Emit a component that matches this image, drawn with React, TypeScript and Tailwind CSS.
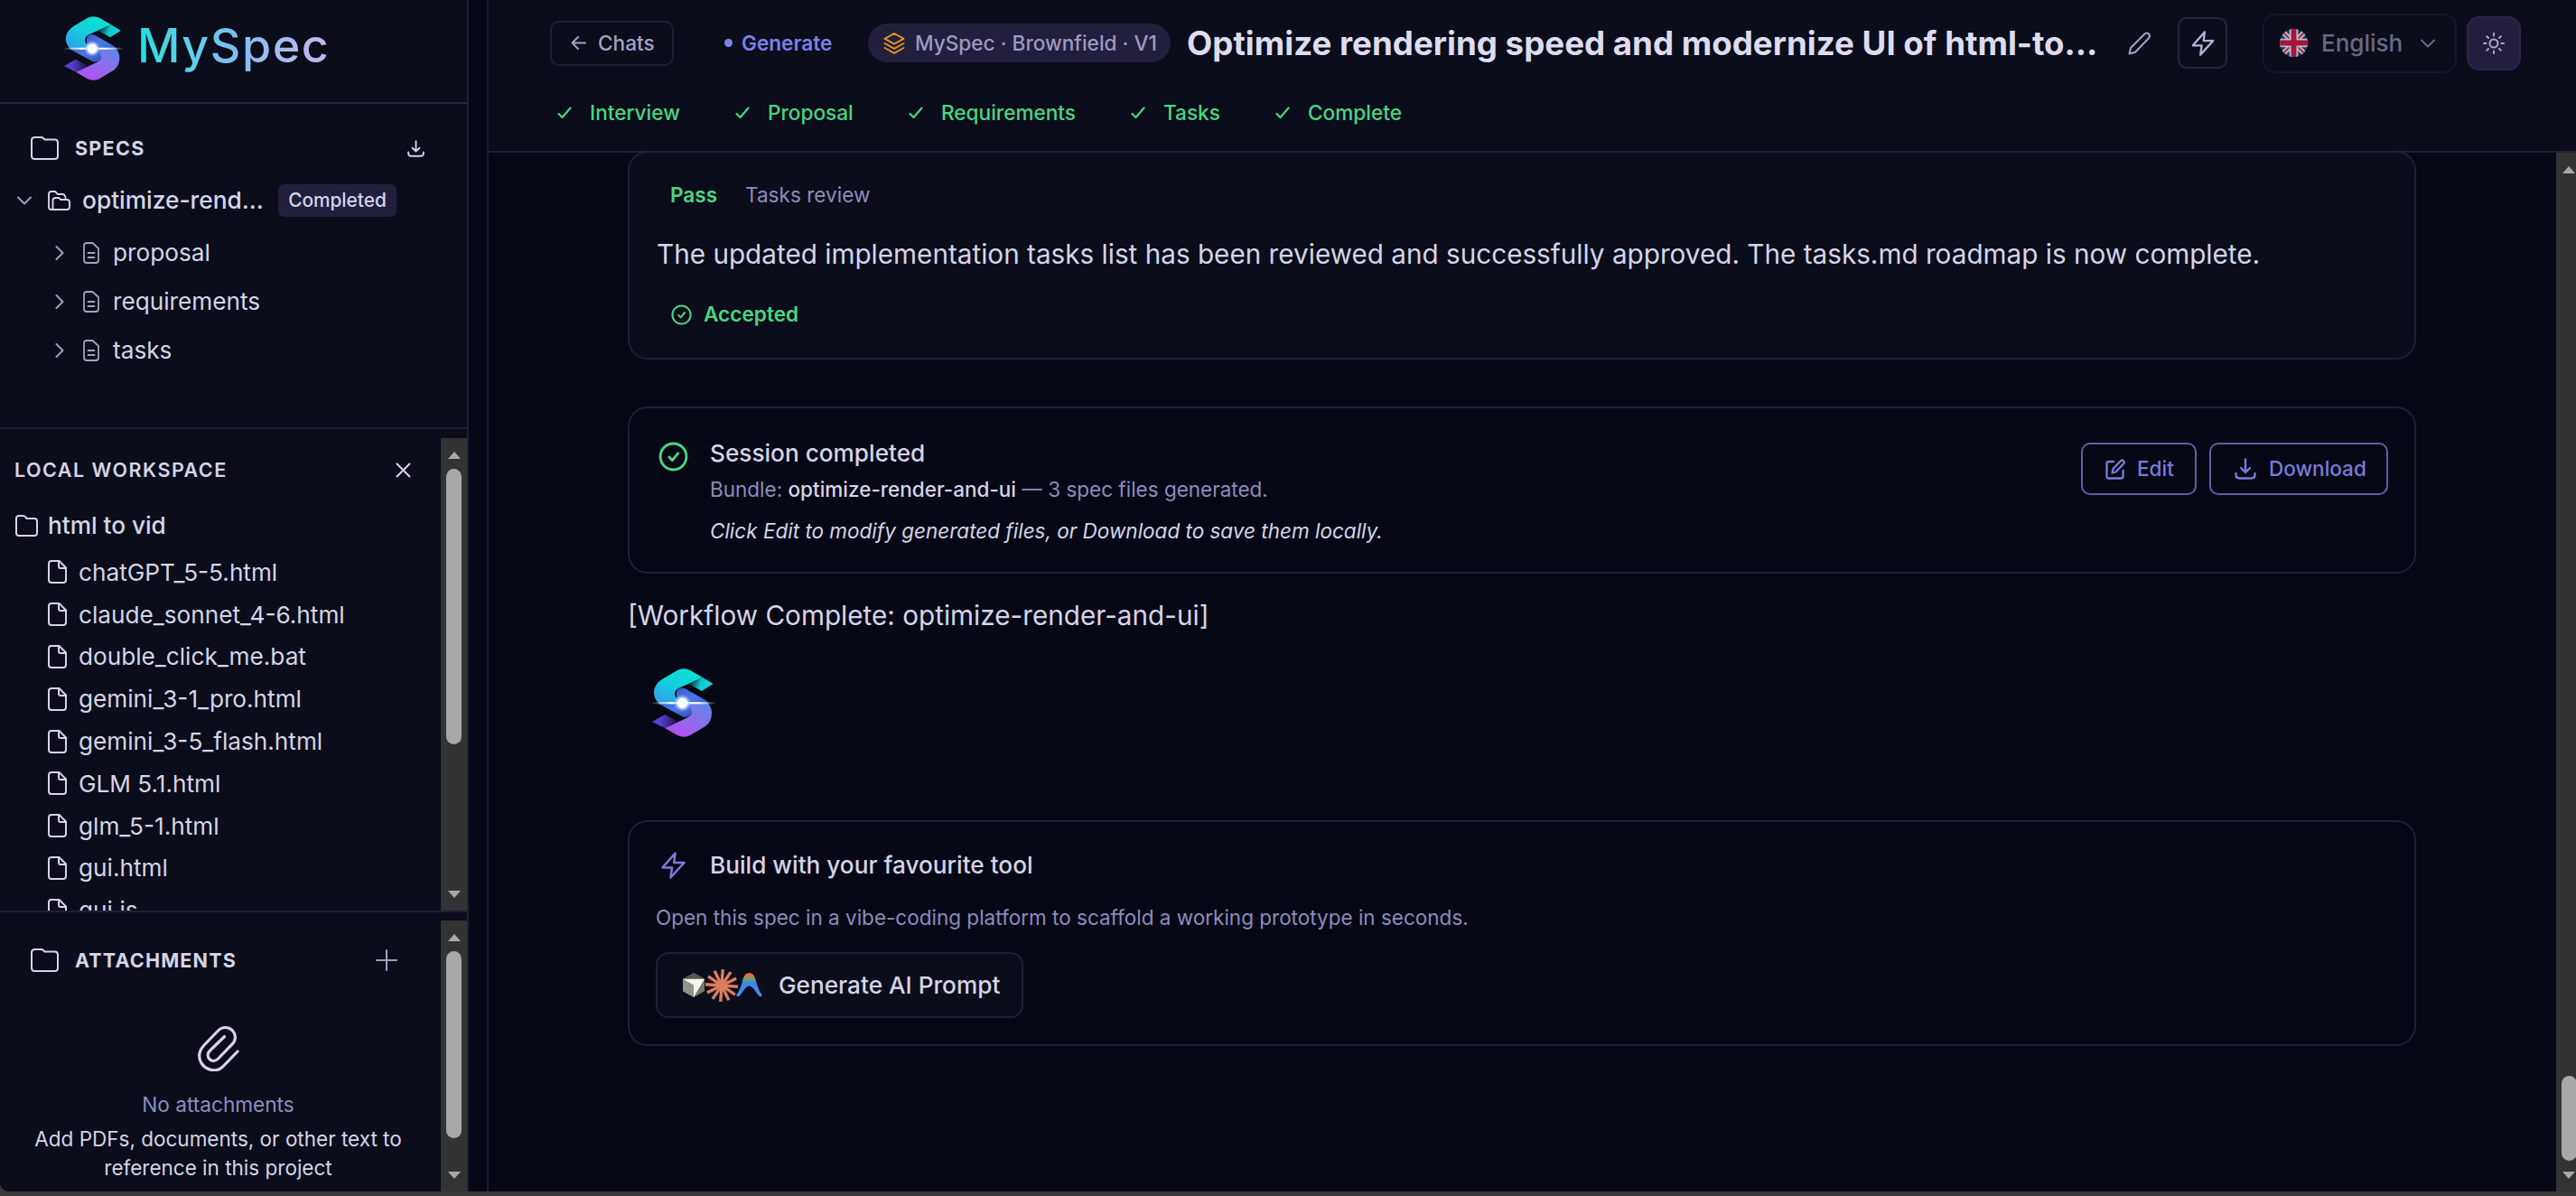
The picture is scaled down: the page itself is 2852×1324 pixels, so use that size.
import React from "react";

type IconProps = { className?: string };

const files = [
  "chatGPT_5-5.html",
  "claude_sonnet_4-6.html",
  "double_click_me.bat",
  "gemini_3-1_pro.html",
  "gemini_3-5_flash.html",
  "GLM 5.1.html",
  "glm_5-1.html",
  "gui.html",
  "gui.js",
];

const specs = ["proposal", "requirements", "tasks"];

const steps = [
  { label: "Interview", width: "w-[197px]" },
  { label: "Proposal", width: "w-[192px]" },
  { label: "Requirements", width: "w-[246px]" },
  { label: "Tasks", width: "w-[160px]" },
  { label: "Complete", width: "w-[160px]" },
];

const rays = [4, 34, 64, 94, 124, 154, 184, 214, 244, 274, 304, 334];

const Logo = ({ className, id }: { className: string; id: string }) => (
  <svg viewBox="0 0 72 76" preserveAspectRatio="none" className={className}>
    <defs>
      <linearGradient id={`${id}-top`} x1="0.8" y1="0" x2="0.2" y2="1">
        <stop offset="0" stopColor="#06e3d2" />
        <stop offset="0.5" stopColor="#14d0dc" />
        <stop offset="1" stopColor="#2f9fe8" />
      </linearGradient>
      <linearGradient id={`${id}-fold`} x1="0" y1="0.3" x2="1" y2="0.5">
        <stop offset="0.1" stopColor="#04454f" />
        <stop offset="0.5" stopColor="#10c8cf" />
        <stop offset="1" stopColor="#19d3dc" />
      </linearGradient>
      <linearGradient id={`${id}-mid`} x1="0" y1="0" x2="1" y2="1">
        <stop offset="0" stopColor="#3a49b8" />
        <stop offset="0.5" stopColor="#4a78e8" />
        <stop offset="1" stopColor="#2c3a9c" />
      </linearGradient>
      <linearGradient id={`${id}-bottom`} x1="0.9" y1="0" x2="0.3" y2="1">
        <stop offset="0" stopColor="#5b86ea" />
        <stop offset="0.5" stopColor="#8c70ec" />
        <stop offset="1" stopColor="#b34df2" />
      </linearGradient>
      <linearGradient id={`${id}-tail`} x1="0" y1="0.5" x2="1" y2="0.5">
        <stop offset="0.3" stopColor="#5a3fd0" />
        <stop offset="1" stopColor="#1c1552" />
      </linearGradient>
      <linearGradient id={`${id}-beam`} x1="0" y1="0" x2="1" y2="0">
        <stop offset="0" stopColor="#fff" stopOpacity="0" />
        <stop offset="0.3" stopColor="#fff" />
        <stop offset="0.7" stopColor="#fff" />
        <stop offset="1" stopColor="#fff" stopOpacity="0" />
      </linearGradient>
      <radialGradient id={`${id}-glow`}>
        <stop offset="0.5" stopColor="#fff" />
        <stop offset="0.7" stopColor="#bcd8ff" stopOpacity="0.6" />
        <stop offset="1" stopColor="#7fb0ff" stopOpacity="0" />
      </radialGradient>
    </defs>
    <path d="M28 26 Q30 20 37 22 L60 35 Q66 39 66 48 L44 50 Q44 54 36 54 L8 39 L28 37 Z" fill={`url(#${id}-mid)`} />
    <path d="M57 10 L43 2 Q36 -1.5 29 2 L12 12 Q3 18 3 27 Q3 34 9 39 L33 39 Q26 33 26 28 Q26 24 31 21.500 Z" fill={`url(#${id}-top)`} />
    <path d="M57 10 L68.500 17 L56 25 L42 17.500 Z" fill={`url(#${id}-fold)`} />
    <path d="M15 66 L29 74 Q36 77.500 43 74 L60 64 Q67 59 67 49 Q67 42 61 38 L38 38 Q45 43 45 48 Q45 52 40 54.500 Z" fill={`url(#${id}-bottom)`} />
    <path d="M15 66 L1 59 L15 51 L29 58.500 Z" fill={`url(#${id}-tail)`} />
    <rect x="0" y="37.200" width="72" height="2.200" fill={`url(#${id}-beam)`} />
    <circle cx="34.500" cy="38.300" r="10" fill={`url(#${id}-glow)`} />
  </svg>
);

const Svg = ({ className = "", box, width = 2, children }: IconProps & { box: string; width?: number; children: React.ReactNode }) => (
  <svg
    viewBox={box}
    fill="none"
    stroke="currentColor"
    strokeWidth={width}
    strokeLinecap="round"
    strokeLinejoin="round"
    className={`shrink-0 ${className}`}
  >
    {children}
  </svg>
);

const FolderIcon = ({ className }: IconProps) => (
  <Svg box="0 0 31 26" className={className}>
    <path d="M1 4.500 Q1 1 4.500 1 H11.500 Q13 1 14 2 L15.500 3.600 H26.500 Q30 3.600 30 7 V21.500 Q30 25 26.500 25 H4.500 Q1 25 1 21.500 Z" />
  </Svg>
);

const SmallFolderIcon = ({ className }: IconProps) => (
  <Svg box="0 0 25 24" className={className}>
    <path d="M1 4 Q1 1 4 1 H8.500 Q10 1 11 2.200 L12.500 4 H21 Q24 4 24 7 V20 Q24 23 21 23 H4 Q1 23 1 20 Z" />
  </Svg>
);

const FolderOpenIcon = ({ className }: IconProps) => (
  <Svg box="0 0 25 22" width={1.9} className={className}>
    <path d="M5 21 H4 Q1 21 1 18 V4 Q1 1 4 1 H8 L11 4 H16 Q19 4 19.500 8" />
    <path d="M5.500 21 V11 Q5.500 8 8.500 8 H12 L14.500 10 H21 Q24 10 24 13 V18 Q24 21 21 21 Z" />
  </Svg>
);

const FileIcon = ({ className }: IconProps) => (
  <Svg box="0 0 21 26" className={className}>
    <path d="M4 1 H12.500 L20 8.500 V22 Q20 25 17 25 H4 Q1 25 1 22 V4 Q1 1 4 1 Z" />
    <path d="M12 1.500 V7 Q12 9 14 9 H19.500" />
  </Svg>
);

const DocIcon = ({ className }: IconProps) => (
  <Svg box="0 0 18 24" width={1.8} className={className}>
    <path d="M4 1 H10.500 L17 7 V20 Q17 23 14 23 H4 Q1 23 1 20 V4 Q1 1 4 1 Z M5.500 12 H12.500 M5.500 17 H12.500" />
  </Svg>
);

const DownloadIcon = ({ className }: IconProps) => (
  <Svg box="0 0 24 24" width={2.4} className={className}>
    <path d="M12 1.500 V15.500 M7 11 L12 16 L17 11 M1.500 17 V18.500 Q1.500 22.500 5.500 22.500 H18.500 Q22.500 22.500 22.500 18.500 V17" />
  </Svg>
);

const CheckIcon = ({ className }: IconProps) => (
  <Svg box="0 0 16 14" width={2.2} className={className}>
    <path d="M1.500 8 L5.500 12 L14.500 1.500" />
  </Svg>
);

const CircleCheckIcon = ({ className }: IconProps) => (
  <Svg box="0 0 32 32" width={2.8} className={className}>
    <path d="M30 16 A14 14 0 1 1 2 16 A14 14 0 1 1 30 16 M11.500 16.500 L14.800 20 L21 12.500" />
  </Svg>
);

const ZapIcon = ({ className }: IconProps) => (
  <Svg box="0 0 27 30" width={2.5} className={className}>
    <path d="M15.500 1.500 L1.500 17.500 H12 L10.500 28.500 L25.500 12 H14.200 Z" />
  </Svg>
);

const ChevronDown = ({ className }: IconProps) => (
  <Svg box="0 0 16 10" className={className}>
    <path d="M1 1.500 L8 8.500 L15 1.500" />
  </Svg>
);

const UkFlag = () => (
  <svg viewBox="0 0 32 32" className="size-[31px] shrink-0">
    <clipPath id="flag">
      <circle cx="16" cy="16" r="16" />
    </clipPath>
    <g clipPath="url(#flag)">
      <rect width="32" height="32" fill="#123a70" />
      <path d="M0 0 L32 32 M32 0 L0 32" stroke="#b9b9c2" strokeWidth="6" />
      <path d="M0 0 L32 32 M32 0 L0 32" stroke="#a3173c" strokeWidth="1.800" />
      <path d="M16 0 V32 M0 16 H32" stroke="#b9b9c2" strokeWidth="10" />
      <path d="M16 0 V32 M0 16 H32" stroke="#a3173c" strokeWidth="6" />
    </g>
  </svg>
);

// Arrow / thumb / arrow column; the thumb size comes in as a class
const Scrollbar = ({ thumb, className = "w-[29px]" }: { thumb: string; className?: string }) => (
  <div className={`flex h-full shrink-0 flex-col items-center bg-[#333333] pt-[15px] pb-[14px] ${className}`}>
    <svg viewBox="0 0 14 8" className="h-2 w-3.5 shrink-0">
      <path d="M7 0 L14 8 H0 Z" fill="#a8a8a8" />
    </svg>
    <div className={`w-[17px] shrink-0 rounded-full bg-[#a8a8a8] ${thumb}`} />
    <svg viewBox="0 0 14 8" className="mt-auto h-2 w-3.5 shrink-0">
      <path d="M0 0 H14 L7 8 Z" fill="#a8a8a8" />
    </svg>
  </div>
);

const Sidebar = () => (
  <aside className="flex h-full w-[519px] shrink-0 flex-col border-r-2 border-[#1f2038] bg-[#0b0d1a] text-[#d5d4e8]">
    <div className="flex h-[115px] shrink-0 items-start border-b-2 border-[#26263f] pt-[18px] pl-[70px]">
      <Logo id="brand" className="h-[71px] w-[67px]" />
      <span className="ml-[15px] bg-linear-to-r from-[#12dfe0] via-[#7dbdf2] to-[#cdb6ee] bg-clip-text pt-px pr-1 text-[52px] leading-[64px] font-medium tracking-[0.03em] text-transparent">
        MySpec
      </span>
    </div>

    {/* Specs tree */}
    <div className="flex h-[360px] shrink-0 flex-col border-b-2 border-[#1f2038] pt-[26px]">
      <div className="flex h-[46px] items-center pr-[47px] pl-[34px]">
        <FolderIcon className="h-[26px] w-[31px]" />
        <span className="ml-[18px] text-[21.500px] font-bold tracking-[0.06em]">SPECS</span>
        <DownloadIcon className="ml-auto size-[19px]" />
      </div>
      <div className="flex h-[70px] items-center pl-[19px]">
        <ChevronDown className="h-[10px] w-4 text-[#a09fc0]" />
        <FolderOpenIcon className="ml-[18px] h-[22px] w-[25px]" />
        <span className="ml-[13px] w-[202px] text-[26.300px] font-medium whitespace-nowrap">optimize-rend...</span>
        <span className="ml-[15px] flex h-9 w-[131px] items-center justify-center rounded-[7px] bg-[#221f3d] text-[20.800px] font-medium">
          Completed
        </span>
      </div>
      <div className="-mt-1 flex flex-col">
        {specs.map((name) => (
          <div key={name} className="flex h-[54px] items-center pl-[61px]">
            <Svg box="0 0 10 16" className="h-4 w-[10px] text-[#a09fc0]">
              <path d="M1.500 1 L8.500 8 L1.500 15" />
            </Svg>
            <DocIcon className="ml-[21px] h-6 w-[18px] text-[#a3a2bd]" />
            <span className="ml-[15px] text-[26.200px]">{name}</span>
          </div>
        ))}
      </div>
    </div>

    {/* Local workspace */}
    <div className="flex h-[535px] shrink-0 border-b-2 border-[#1f2038]">
      <div className="min-w-0 flex-1 overflow-hidden pt-[22px] pl-4">
        <div className="flex h-[46px] items-center">
          <span className="text-[21.500px] font-semibold tracking-[0.069em]">LOCAL WORKSPACE</span>
          <Svg box="0 0 17 17" className="mr-[33px] ml-auto size-[17px]">
            <path d="M1.500 1.500 L15.500 15.500 M15.500 1.500 L1.500 15.500" />
          </Svg>
        </div>
        <div className="mt-[15px] flex h-[48px] items-center pl-px">
          <SmallFolderIcon className="h-6 w-[25px]" />
          <span className="ml-[11px] text-[26.200px] font-medium">html to vid</span>
        </div>
        <div className="mt-1 flex flex-col">
          {files.map((name) => (
            <div key={name} className="flex h-[46.800px] items-center pl-[37px]">
              <FileIcon className="h-[26px] w-[21px]" />
              <span className="ml-[13px] text-[26.200px]">{name}</span>
            </div>
          ))}
        </div>
      </div>
      <div className="pt-[10px]">
        <Scrollbar thumb="mt-[11px] h-[305px]" />
      </div>
    </div>

    {/* Attachments */}
    <div className="flex min-h-0 flex-1">
      <div className="min-w-0 flex-1 pt-[30px]">
        <div className="flex h-[46px] items-center pl-[34px]">
          <FolderIcon className="h-[26px] w-[31px]" />
          <span className="ml-[18px] text-[21.500px] font-bold tracking-[0.055em]">ATTACHMENTS</span>
          <Svg box="0 0 24 24" className="mr-[48px] ml-auto size-6 text-[#a09fc0]">
            <path d="M12 1 V23 M1 12 H23" />
          </Svg>
        </div>
        <div className="flex flex-col items-center pt-[50px] pr-[5px]">
          <Svg box="0 0 46 50" width={3.2} className="h-[50px] w-[46px]">
            <path d="M44 28 L27.500 45 C20 52 9 48.500 4 41 C0 34 1.500 27 7 21 L22 5.500 C27 0 34 0.500 38.500 5 C42.500 9.500 42.500 15.500 38 20 L22.500 36 C19.500 39 15.500 39 13 36.500 C10.500 34 10.500 30 13.500 27 L29.500 11.500" />
          </Svg>
          <span className="mt-5 text-[22.600px] leading-[34px] text-[#8e8bbd]">No attachments</span>
          <p className="mt-[5px] text-center text-[22.500px] leading-[32px] whitespace-nowrap">
            Add PDFs, documents, or other text to
            <br />
            reference in this project
          </p>
        </div>
      </div>
      <div className="pt-[9px]">
        <Scrollbar thumb="mt-[11px] h-[207px]" />
      </div>
    </div>
  </aside>
);

const Header = () => (
  <header className="h-[169px] shrink-0 border-b-2 border-[#1f2038] bg-[#0b0d1a]">
    <div className="flex h-[95px] items-center pl-[68px] text-[22.600px] font-medium whitespace-nowrap">
      <button className="flex h-[50px] w-[137px] shrink-0 items-center rounded-[10px] border-2 border-[#1f2038] pl-[21px] text-[#a3a1c4]">
        <Svg box="0 0 17 17" className="size-[17px]">
          <path d="M16 8.500 H1.500 M8 2 L1.500 8.500 L8 15" />
        </Svg>
        <span className="ml-[13px]">Chats</span>
      </button>
      <span className="ml-[56px] size-[9px] shrink-0 rounded-full bg-[#7f83e6]" />
      <span className="ml-[10px] w-[140px] shrink-0 font-semibold text-[#7a80ea]">Generate</span>
      <span className="flex h-[43px] w-[335px] shrink-0 items-center rounded-full bg-[#221f3d] pl-[17px] text-[#9c9ac0]">
        <Svg box="0 0 24 24" width={1.9} className="size-6 text-[#e3951d]">
          <path d="M12 1 L22.500 6.800 L12 12.600 L1.500 6.800 Z M1.500 12 L12 17.800 L22.500 12 M1.500 17 L12 22.800 L22.500 17" />
        </Svg>
        <span className="ml-[11px]">MySpec · Brownfield · V1</span>
      </span>
      <h1 className="ml-[18px] w-[1042px] shrink-0 text-[36.700px] font-bold text-[#dddcf0]">
        Optimize rendering speed and modernize UI of html-to...
      </h1>
      <Svg box="0 0 25 26" className="h-[26px] w-[25px] text-[#a3a1c4]">
        <path d="M1.500 24.500 L3 18 L18.500 2.500 Q21 0.500 23 2.500 Q25 4.800 23 7.200 L8 22.800 Z" />
      </Svg>
      <button className="ml-[30px] flex h-[57px] w-[55px] shrink-0 items-center justify-center rounded-[10px] border-2 border-[#26263f] text-[#b3b1d6]">
        <ZapIcon className="h-7 w-[26px]" />
      </button>
      <button className="ml-[39px] flex h-[66px] w-[215px] shrink-0 items-center rounded-[14px] border-2 border-[#161729] pl-[17px] text-[26px] text-[#6a6983]">
        <UkFlag />
        <span className="ml-[15px] w-[110px] text-left">English</span>
        <ChevronDown className="h-[10px] w-4" />
      </button>
      <button className="ml-[11px] flex size-[60px] shrink-0 items-center justify-center rounded-[14px] border-2 border-[#29264a] bg-[#221f3d] text-[#a9a7cb]">
        <Svg box="0 0 24 24" className="size-6">
          <circle cx="12" cy="12" r="4.500" />
          <path d="M12 1 V3.500 M12 20.500 V23 M1 12 H3.500 M20.500 12 H23 M4.200 4.200 L6 6 M18 18 L19.800 19.800 M4.200 19.800 L6 18 M18 6 L19.800 4.200" />
        </Svg>
      </button>
    </div>
    <div className="flex h-[60px] items-center pl-[76px] text-[22.600px] font-medium text-[#4ad583]">
      {steps.map((step) => (
        <div key={step.label} className={`flex shrink-0 items-center ${step.width}`}>
          <CheckIcon className="h-[14px] w-4" />
          <span className="ml-5">{step.label}</span>
        </div>
      ))}
    </div>
  </header>
);

const Content = () => (
  <main className="flex min-h-0 flex-1">
    <div className="flex min-w-0 flex-1 flex-col pr-[155px] pl-[154px] text-[#d5d4e8]">
      {/* Review card, scrolled under the header */}
      <section className="-mt-[2px] h-[231px] shrink-0 rounded-[22px] border-2 border-[#1f2038] bg-[#0b0d1a] pt-[29px] pl-[30px]">
        <div className="flex h-[36px] items-center pl-[15px] text-[22.600px]">
          <span className="w-[83px] font-semibold text-[#4ad583]">Pass</span>
          <span className="text-[#8e8bbd]">Tasks review</span>
        </div>
        <p className="mt-[22px] text-[29.700px] leading-[50px] whitespace-nowrap">
          The updated implementation tasks list has been reviewed and successfully approved. The tasks.md roadmap is now complete.
        </p>
        <div className="mt-[24px] flex h-[36px] items-center pl-4 text-[22.600px] font-semibold text-[#4ad583]">
          <CircleCheckIcon className="size-[23px]" />
          <span className="ml-[13px]">Accepted</span>
        </div>
      </section>

      <section className="mt-[52px] flex h-[185px] shrink-0 items-start rounded-[22px] border-2 border-[#1f2038] pr-[29px] pl-[32px]">
        <CircleCheckIcon className="mt-[37px] size-[33px] text-[#4ad583]" />
        <div className="ml-[24px] flex flex-col whitespace-nowrap">
          <h2 className="mt-[30px] text-[26.200px] leading-[40px] font-medium">Session completed</h2>
          <p className="mt-[2px] text-[22.500px] leading-[36px] text-[#8e8bbd]">
            Bundle: <span className="font-medium text-[#d5d4e8]">optimize-render-and-ui</span> — 3 spec files generated.
          </p>
          <p className="mt-[10px] text-[22.500px] leading-[36px] italic">
            Click Edit to modify generated files, or Download to save them locally.
          </p>
        </div>
        <div className="mt-[38px] ml-auto flex gap-[14px] text-[22.500px] font-medium text-[#7a7dd8]">
          <button className="flex h-[58px] w-[128px] items-center rounded-[10px] border-2 border-[#5d60a8] pl-[25px]">
            <Svg box="0 0 22 23" width={2.3} className="h-[23px] w-[22px]">
              <path d="M9 3 H3.500 Q1.500 3 1.500 5 V19.500 Q1.500 21.500 3.500 21.500 H17.500 Q19.500 21.500 19.500 19.500 V13" />
              <path d="M7.500 15.500 L8.500 11 L17 2.300 Q18.500 0.800 20 2.300 Q21.500 3.800 20 5.500 L11.500 14.500 Z" />
            </Svg>
            <span className="ml-[13px]">Edit</span>
          </button>
          <button className="flex h-[58px] w-[198px] items-center rounded-[10px] border-2 border-[#5d60a8] pl-[26px]">
            <DownloadIcon className="size-6" />
            <span className="ml-[14px]">Download</span>
          </button>
        </div>
      </section>

      <p className="mt-[22px] shrink-0 text-[29.700px] leading-[48px]">[Workflow Complete: optimize-render-and-ui]</p>
      <Logo id="reply" className="mt-[35px] ml-[26px] h-[76px] w-[72px] shrink-0" />

      <section className="mt-[92px] h-[250px] shrink-0 rounded-[22px] border-2 border-[#1f2038] px-[29px]">
        <div className="mt-[28px] flex h-[40px] items-center">
          <ZapIcon className="ml-[6px] h-[30px] w-[27px] text-[#7a7dd8]" />
          <h2 className="ml-[27px] text-[26.200px] font-medium">Build with your favourite tool</h2>
        </div>
        <p className="mt-[20px] text-[22.500px] leading-[36px] text-[#8e8bbd]">
          Open this spec in a vibe-coding platform to scaffold a working prototype in seconds.
        </p>
        <button className="mt-[20px] flex h-[73px] w-[407px] items-center rounded-[14px] border-2 border-[#1f2038] bg-[#0b0d1a] pl-[28px]">
          {/* Cursor */}
          <svg viewBox="0 0 25 28" className="h-[27px] w-6 shrink-0">
            <path d="M12.500 0 L25 7 V21 L12.500 28 L0 21 V7 Z" fill="#77776f" />
            <path d="M12.500 0 L25 7 H0 Z" fill="#55554f" />
            <path d="M0 7 L12.500 14 V28 L0 21 Z" fill="#93938c" />
            <path d="M0 7 H25 L12.500 28 V14 Z" fill="#f4f4ee" />
          </svg>
          {/* Claude */}
          <svg viewBox="-19 -19 38 38" className="size-[38px] shrink-0" stroke="#db7c5c" strokeWidth="3.400">
            {rays.map((angle) => (
              <path key={angle} d="M0 0 V-18" transform={`rotate(${angle})`} />
            ))}
          </svg>
          {/* Antigravity */}
          <svg viewBox="0 0 30 28" className="-ml-[3px] h-[27px] w-[29px] shrink-0">
            <defs>
              <linearGradient id="arc" x1="0" y1="0" x2="0" y2="1">
                <stop offset="0" stopColor="#e8663c" />
                <stop offset="0.14" stopColor="#d9764e" />
                <stop offset="0.28" stopColor="#55a878" />
                <stop offset="0.42" stopColor="#3b86e8" />
                <stop offset="1" stopColor="#4a8df0" />
              </linearGradient>
            </defs>
            <path
              d="M15 0 C20 0 21.500 5 23 10 C25 17 26.500 21 29.500 25 Q30 28 27 27 C23 24 20 15 15 15 C10 15 7 24 3 27 Q0 28 0.500 25 C3.500 21 5 17 7 10 C8.500 5 10 0 15 0 Z"
              fill="url(#arc)"
            />
          </svg>
          <span className="ml-[18px] text-[26.200px] font-medium whitespace-nowrap">Generate AI Prompt</span>
        </button>
      </section>
    </div>
    <Scrollbar className="w-[22px] pl-[6px]" thumb="mt-[999px] h-[94px]" />
  </main>
);

const App = () => {
  return (
    <div className="flex h-[1324px] w-[2852px] flex-col overflow-hidden bg-[#3a3a3a] font-['Inter',sans-serif]">
      <div className="flex h-[1319px] shrink-0 overflow-hidden rounded-bl-[10px] bg-[#070815]">
        <Sidebar />
        <div className="ml-[20px] flex min-w-0 flex-1 flex-col border-l-2 border-[#1a1b30]">
          <Header />
          <Content />
        </div>
      </div>
    </div>
  );
};

export default App;
